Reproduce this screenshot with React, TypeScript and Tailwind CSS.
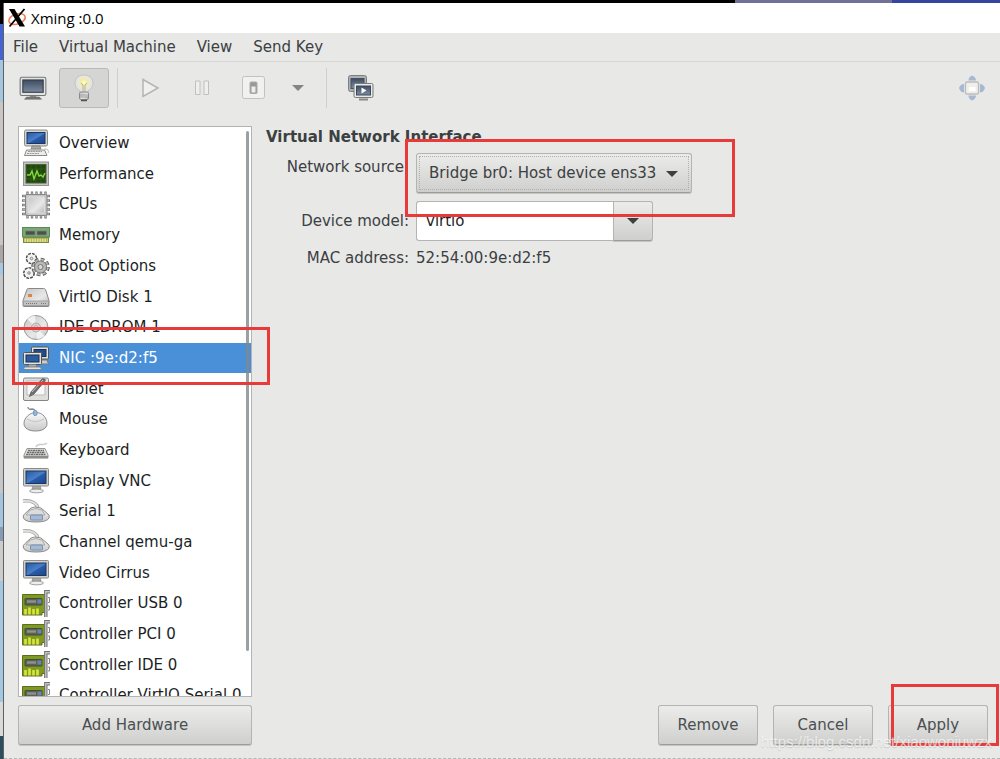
import type { ReactNode } from "react";

const Svg = ({ children, className = "h-7 w-7" }: { children: ReactNode; className?: string }) => (
  <svg viewBox="0 0 28 28" className={`${className} shrink-0`} fill="none" aria-hidden="true">
    {children}
  </svg>
);

const Gradients = () => (
  <svg className="absolute h-0 w-0" aria-hidden="true">
    <defs>
      <linearGradient id="screen" x1="0" y1="0" x2="1" y2="1">
        <stop offset="0" stopColor="#2858a0" />
        <stop offset="0.5" stopColor="#4a80c8" />
        <stop offset="0.55" stopColor="#2a5cab" />
        <stop offset="1" stopColor="#1c4488" />
      </linearGradient>
      <linearGradient id="slate" x1="0" y1="0" x2="0" y2="1">
        <stop offset="0" stopColor="#3e4c60" />
        <stop offset="1" stopColor="#7d8ba0" />
      </linearGradient>
      <linearGradient id="metal" x1="0" y1="0" x2="1" y2="1">
        <stop offset="0" stopColor="#c4c4c4" />
        <stop offset="0.6" stopColor="#e8e8e8" />
        <stop offset="1" stopColor="#b8b8b8" />
      </linearGradient>
      <linearGradient id="shell" x1="0" y1="0" x2="0" y2="1">
        <stop offset="0" stopColor="#fafafa" />
        <stop offset="1" stopColor="#c8c8c8" />
      </linearGradient>
      <radialGradient id="bulb">
        <stop offset="0" stopColor="#fffde0" />
        <stop offset="0.55" stopColor="#f1ec9a" />
        <stop offset="1" stopColor="#e9e9e4" />
      </radialGradient>
    </defs>
  </svg>
);

const ComputerIcon = () => (
  <Svg>
    <rect x="2.500" y="1" width="23" height="16" rx="1.500" fill="#d4d4d0" stroke="#8a8a86" />
    <rect x="5" y="3.500" width="18" height="11" fill="url(#screen)" stroke="#1d3764" />
    <path d="M10 17h8l1 3H9z" fill="#a9a9a5" stroke="#777" strokeWidth=".7" />
    <path d="M4.500 21h18l2.500 5.500H2.500z" fill="#ecece8" stroke="#8a8a86" />
    <path d="M6 22.500h14M5 24.500h12" stroke="#999" strokeDasharray="2 .6" />
    <path d="M22 20q6 0 4 4" stroke="#bbb" />
  </Svg>
);

const PerformanceIcon = () => (
  <Svg>
    <rect x="1.500" y="2" width="25" height="23.500" fill="#c4c5c3" stroke="#91948f" />
    <rect x="4" y="4.500" width="20" height="18.500" fill="#204a0b" stroke="#48613b" />
    <path d="M4 9h20M4 14h20M4 19h20M9 5v18M14 5v18M19 5v18" stroke="#386a20" strokeWidth=".5" />
    <path d="M5 15h3l2-4 2 8 3-8 2 5 2-1 2 2 2-4" stroke="#86d641" strokeWidth="1.4" />
  </Svg>
);

const CpuIcon = () => (
  <Svg>
    <path
      d="M5.500 .5v27M10 .5v27M14.500 .5v27M19 .5v27M23.500 .5v27M0 5h28M0 9.500h28M0 14h28M0 18.500h28M0 23h28"
      stroke="#7b7b7b"
      strokeWidth="2.400"
    />
    <path
      d="M5.500 1.500v25M10 1.500v25M14.500 1.500v25M19 1.500v25M23.500 1.500v25M1 5h26M1 9.500h26M1 14h26M1 18.500h26M1 23h26"
      stroke="#c9c9c9"
      strokeWidth=".8"
    />
    <rect x="3.500" y="3.500" width="21.500" height="21" rx="1.500" fill="#c6c6c6" stroke="#858585" />
    <rect x="6" y="6" width="16.500" height="16" rx="1" fill="url(#metal)" stroke="#dedede" />
  </Svg>
);

const MemoryIcon = () => (
  <Svg>
    <rect x=".5" y="6.500" width="27" height="9.500" fill="#78a873" stroke="#5c8a5a" />
    <path d="M3.500 10h9.500v4H3.500zM15 10h9.500v4H15z" fill="#4c514c" stroke="#7d857b" strokeWidth=".7" />
    <rect x="1.500" y="16.500" width="25" height="5" fill="#b3b65a" stroke="#6f8c4a" />
    <path d="M2.500 19.500h23" stroke="#e6dc86" strokeWidth="3" strokeDasharray="1.500 1" />
  </Svg>
);

const BootIcon = () => (
  <Svg>
    <circle cx="9.500" cy="6.500" r="5" stroke="#4e4e4e" strokeWidth="1.600" strokeDasharray="2.900 1" />
    <circle cx="9.500" cy="6.500" r="4" fill="#f2f2f0" />
    <circle cx="9.500" cy="6.500" r="1.300" fill="#ddd" stroke="#777" strokeWidth=".8" />
    <circle cx="7" cy="21" r="5.200" stroke="#4e4e4e" strokeWidth="1.600" strokeDasharray="2.900 1" />
    <circle cx="7" cy="21" r="4.200" fill="#f2f2f0" />
    <circle cx="7" cy="21" r="1.300" fill="#ddd" stroke="#777" strokeWidth=".8" />
    <circle cx="18.500" cy="15" r="7.500" stroke="#666" strokeWidth="3.600" strokeDasharray="3.600 2.290" />
    <circle cx="18.500" cy="15" r="7.400" stroke="#bbb" strokeWidth="1.600" strokeDasharray="2.800 3.010" strokeDashoffset="-.4" />
    <circle cx="18.500" cy="15" r="6" fill="#b9b9b7" stroke="#777" />
    <circle cx="18.500" cy="15" r="2.500" fill="#d8d8d6" stroke="#777" />
  </Svg>
);

const DiskIcon = () => (
  <Svg>
    <path
      d="M5 6.500q0-1 1.500-1h15q1.500 0 2 1l3.500 11v5q0 1-1 1h-24q-1 0-1-1v-5z"
      fill="url(#metal)"
      stroke="#888"
    />
    <path d="M1.500 18h25v4.500h-25z" fill="#c2c2c0" stroke="#8f8f8d" strokeWidth=".7" />
    <rect x="6" y="11" width="4" height="3" fill="#e5813f" />
    <path d="M4 20.500h11M19 20.500h5" stroke="#777" strokeDasharray="1 1" />
  </Svg>
);

const CdIcon = () => (
  <Svg>
    <circle cx="14" cy="14.500" r="12" fill="url(#metal)" stroke="#999" />
    <path d="M14 14.500L5 6q4-3.500 8-3.500zM14 14.500l9 8.500q-4 3-8 3.500z" fill="#f7f7f5" opacity=".8" />
    <circle cx="14" cy="14.500" r="4.500" fill="#d2d2d2" stroke="#aaa" />
    <circle cx="14" cy="14.500" r="1.700" fill="#fff" stroke="#ba9f9b" />
  </Svg>
);

const NicIcon = () => (
  <Svg>
    <rect x="9.500" y="3" width="17" height="12" rx="1" fill="#e4e2db" stroke="#555" />
    <rect x="12" y="5.500" width="12" height="7" fill="#204c8a" stroke="#152f5a" />
    <path d="M16 16h9l1.500 4h-8" fill="#ccc" stroke="#777" />
    <rect x="1.500" y="8.500" width="18" height="12" rx="1" fill="#e4e2db" stroke="#555" />
    <rect x="4" y="11" width="13" height="7" fill="#2a5b9d" stroke="#152f5a" />
    <path d="M7 20.500h7v2.500H7z" fill="#aaa" />
    <path d="M2.500 23h16l1 2.500h-18z" fill="#e4e2db" stroke="#777" strokeWidth=".8" />
  </Svg>
);

const TabletIcon = () => (
  <Svg>
    <rect x="1.500" y="3" width="25" height="22.500" rx="1.500" fill="#dededc" stroke="#858583" />
    <path d="M5 6h18v14H5z" fill="#f8f8f8" stroke="#bbb" />
    <path d="M20 4q4-1 3 2l-11 13-4.500 2.500L9 17z" fill="#6f716f" stroke="#5a5c5a" strokeWidth=".8" />
    <path d="M10 17L21 5" stroke="#c4c4c4" />
  </Svg>
);

const MouseIcon = () => (
  <Svg>
    <path d="M6 2q0 3 4 2 4 0 4 6" stroke="#888" strokeWidth="1.300" />
    <path
      d="M14 7.500c7 0 11 6 11 11 0 5-5 7.500-11.500 7.500S2 23.500 2 18.500c0-5 5-11 12-11z"
      fill="url(#shell)"
      stroke="#8b8b89"
    />
    <path d="M5 14q8 5 17 0" stroke="#c2c2c0" />
    <rect x="11.500" y="5.500" width="3.500" height="5" rx="1.500" fill="#93b8e0" stroke="#7397c2" />
  </Svg>
);

const KeyboardIcon = () => (
  <Svg>
    <path d="M14 11q1-3 5-2.500T25 7" stroke="#ccc" strokeWidth="1.500" />
    <path d="M5 12.500h18l3 6.500v3H2v-3z" fill="#e2e2e0" stroke="#979795" />
    <path d="M6 14.500h16M5 16.500h18M4 18.500h20" stroke="#6d6d6d" strokeWidth="1.500" strokeDasharray="2 .5" />
    <path d="M2 21h24" stroke="#8d8d8b" strokeWidth="2.400" />
  </Svg>
);

const DisplayIcon = () => (
  <Svg>
    <path d="M11 18h7l1 4h-9z" fill="#aaa" stroke="#888" strokeWidth=".7" />
    <ellipse cx="14.500" cy="24" rx="7" ry="1.800" fill="#eee" stroke="#a0a09e" />
    <rect x="1.500" y="1.500" width="25" height="17.500" rx="1" fill="#cfcfcb" stroke="#8a8a86" />
    <rect x="4" y="4" width="20" height="12.500" fill="url(#screen)" stroke="#1d3764" />
  </Svg>
);

const SerialIcon = () => (
  <Svg>
    <path d="M1 3c8-1 15 2 15 9" stroke="#a8a8a6" strokeWidth="3.500" />
    <path d="M1 3c8-1 15 2 15 9" stroke="#e2e2e0" strokeWidth="1.800" />
    <path
      d="M9 10q3-2 10 0l7 6q2 1.500 1 4-2 4-13 4T1.500 20q-1-2.500 1-4z"
      fill="url(#shell)"
      stroke="#8a8a88"
    />
    <path d="M8 12q6-3 12 0l3 5H4z" fill="#dcdcda" stroke="#aaa" />
    <rect x="8.500" y="17" width="12" height="5" rx="1" fill="#a3bbd8" stroke="#7b8fa8" />
  </Svg>
);

const CardIcon = () => (
  <Svg>
    <path d="M.5 4.500h23v18h-3.500v2.500H.5z" fill="#7f9a24" stroke="#5c6f1f" />
    <rect x="3" y="8.500" width="17" height="6.500" rx=".5" fill="#5c6158" stroke="#43502c" />
    <path d="M5 11.500h9" stroke="#90938e" strokeWidth="2.400" />
    <path d="M15.500 9.500h4v4h-4z" fill="#6784b5" />
    <path d="M3.500 24.500v-5.500M7.500 24.500v-7M11.500 24.500v-5.500M15.500 24.500v-6" stroke="#dbe63a" strokeWidth="2.600" />
    <path d="M28 1.800h-4.200V27" stroke="#727272" strokeWidth="3.400" />
    <path d="M28 1.800h-4.200V27" stroke="#c4c4c2" strokeWidth="1.400" />
    <path d="M26 7.500h1.500v5H26M26 16h1.500v4H26" stroke="#888" />
  </Svg>
);

const hardware = [
  { icon: ComputerIcon, label: "Overview" },
  { icon: PerformanceIcon, label: "Performance" },
  { icon: CpuIcon, label: "CPUs" },
  { icon: MemoryIcon, label: "Memory" },
  { icon: BootIcon, label: "Boot Options" },
  { icon: DiskIcon, label: "VirtIO Disk 1" },
  { icon: CdIcon, label: "IDE CDROM 1" },
  { icon: NicIcon, label: "NIC :9e:d2:f5", selected: true },
  { icon: TabletIcon, label: "Tablet" },
  { icon: MouseIcon, label: "Mouse" },
  { icon: KeyboardIcon, label: "Keyboard" },
  { icon: DisplayIcon, label: "Display VNC" },
  { icon: SerialIcon, label: "Serial 1" },
  { icon: SerialIcon, label: "Channel qemu-ga" },
  { icon: DisplayIcon, label: "Video Cirrus" },
  { icon: CardIcon, label: "Controller USB 0" },
  { icon: CardIcon, label: "Controller PCI 0" },
  { icon: CardIcon, label: "Controller IDE 0" },
  { icon: CardIcon, label: "Controller VirtIO Serial 0" },
];

const buttonStyle =
  "h-10 rounded-[3px] border border-[#b4b5b3] border-b-[#9c9d9b] bg-linear-to-b from-[#ececeb] to-[#cfcfcd] shadow-[0_1px_0_#c4c5c3]";

const actionStyle = `${buttonStyle} w-[100px] text-[#4a4f51]`;

const Caret = ({ className = "" }: { className?: string }) => (
  <svg viewBox="0 0 12 6" className={`h-[6px] w-3 ${className}`} aria-hidden="true">
    <path d="M0 0h12L6 6z" fill="currentColor" />
  </svg>
);

function DesktopEdge() {
  return (
    <div className="flex w-1 shrink-0 flex-col border-r border-[#5f6163]">
      <div className="h-[21px] bg-black" />
      <div className="h-9 bg-[#4163d6]" />
      <div className="h-[42px] bg-[#a5c6df]" />
      <div className="h-[143px] bg-[#c9c6c3]" />
      <div className="h-[18px] bg-[#a9a6a4]" />
      <div className="h-3 bg-[#a5c8e4]" />
      <div className="h-[218px] bg-[#c6c6c6]" />
      <div className="h-[34px] bg-[#a3c5e0]" />
      <div className="h-[14px] bg-[#8699b5]" />
      <div className="h-10 bg-[#cccccb]" />
      <div className="h-[121px] bg-[#a3c9e2]" />
      <div className="h-[34px] bg-[#dadad9]" />
      <div className="grow bg-[#2d4e60]" />
    </div>
  );
}

function TitleBar() {
  return (
    <header className="flex h-[30px] items-center gap-1 bg-white pl-[3px] font-['Open_Sans','Noto_Sans',sans-serif] text-[15px] text-black">
      <svg viewBox="0 0 20 20" className="h-5 w-5" aria-hidden="true">
        <ellipse cx="10" cy="11" rx="8.500" ry="5" fill="none" stroke="#ee7a50" strokeWidth="1.600" transform="rotate(-18 10 11)" />
        <path d="M2 1h5.500L18 18.500h-5.500z" fill="#000" />
        <path d="M17.500 1L2.500 18.500" stroke="#000" strokeWidth="1.800" />
      </svg>
      <h1>Xming :0.0</h1>
    </header>
  );
}

function Toolbar() {
  return (
    <div className="flex h-[51px] items-center pl-[14px] pr-3">
      <button type="button" aria-label="Console">
        <Svg className="h-[30px] w-[30px]">
          <path d="M11 20h6v3h-6z" fill="#8d8f8c" />
          <path d="M6 24.500l2-2h12l2 2z" fill="#777" stroke="#666" strokeWidth=".5" />
          <rect x="2" y="4" width="24" height="17" rx="1.500" fill="#e2e2df" stroke="#74777a" />
          <rect x="4.500" y="6.500" width="19" height="11.500" fill="url(#slate)" stroke="#303c4c" />
        </Svg>
      </button>
      <button
        type="button"
        aria-label="Details"
        aria-pressed="true"
        className="ml-[11px] flex h-10 w-[50px] items-center justify-center rounded-[3px] border border-[#b9bab8] bg-[#d5d6d4]"
      >
        <Svg>
          <path d="M10 17C2 12 4 1 14 1s12 11 4 16v2h-8z" fill="#e4e4e2" stroke="#c2c2c0" />
          <circle cx="14" cy="8.500" r="6" fill="url(#bulb)" />
          <path d="M11 9l2 2v7M17 9l-2 2v7" stroke="#aaa58c" strokeWidth=".8" />
          <rect x="9.500" y="18" width="9" height="7.500" rx="1.500" fill="url(#metal)" stroke="#888" />
          <path d="M10 21h8M10 23h8" stroke="#888" strokeWidth=".8" />
          <path d="M11 26.500h6" stroke="#555" strokeWidth="1.500" />
        </Svg>
      </button>
      <div className="ml-2 h-10 w-px bg-[#cfd0ce]" />
      <button type="button" aria-label="Run" className="ml-[18px]" disabled>
        <Svg>
          <path d="M7 5.500L22 14 7 22.500z" fill="#f0f0ee" stroke="#b4b5b3" strokeWidth="1.500" />
        </Svg>
      </button>
      <button type="button" aria-label="Pause" className="ml-6" disabled>
        <Svg>
          <path d="M7.500 7h4.500v13.500H7.500zM16 7h4.500v13.500H16z" fill="#efefed" stroke="#c0c1bf" />
        </Svg>
      </button>
      <button type="button" aria-label="Shut down" className="ml-6" disabled>
        <Svg>
          <rect x="2.500" y="2.500" width="22" height="22" rx="2" fill="#f1f1ef" stroke="#c2c3c1" />
          <rect x="10" y="8" width="7" height="11.500" rx="1" fill="#999" stroke="#aaaba9" />
          <rect x="11.500" y="12.500" width="4" height="6" fill="#eee" />
        </Svg>
      </button>
      <button type="button" aria-label="Shut down options" className="ml-6" disabled>
        <Caret className="text-[#838684]" />
      </button>
      <div className="ml-[22px] h-10 w-px bg-[#cfd0ce]" />
      <button type="button" aria-label="Snapshots" className="ml-5">
        <Svg>
          <rect x="1.500" y="1.500" width="18" height="16" rx="2" fill="#aeb1b2" stroke="#7c7f80" />
          <rect x="4" y="4.500" width="13" height="10" fill="url(#slate)" stroke="#445164" />
          <rect x="7" y="9.500" width="19" height="14" rx="1.500" fill="#e9e9e7" stroke="#777a7c" />
          <rect x="9.500" y="12" width="14" height="9" fill="url(#slate)" stroke="#3a485c" />
          <path d="M14.500 13.500l5 3-5 3z" fill="#fff" />
          <path d="M12 25.500h9" stroke="#888" strokeWidth="2" />
        </Svg>
      </button>
      <button type="button" aria-label="Fullscreen" className="ml-auto mr-0.5" disabled>
        <Svg>
          <rect x="7.500" y="8" width="13" height="12" rx="1.500" fill="#efefed" stroke="#bcbdbb" strokeWidth="1.400" />
          <rect x="11" y="13" width="6.500" height="4" fill="#fff" />
          <path
            d="M10.500 6.500q0-3.500 3.500-5 4 1.500 4 5zM10.500 21.500q0 3.500 3.500 5 4-1.500 4-5zM6 10q-3.500 0-5 4 1.500 4.500 5 4.500zM22 10q3.500 0 5 4-1.500 4.500-5 4.500z"
            fill="#a7b9d2"
          />
        </Svg>
      </button>
    </div>
  );
}

function HardwareList() {
  return (
    <aside className="relative flex w-[234px] shrink-0 flex-col gap-2">
      <div className="relative h-[571px] overflow-hidden border border-[#b3b4b2] bg-white">
        <ul className="grid h-[584px] auto-rows-fr pt-px">
          {hardware.map((item) => (
            <li key={item.label} className="flex">
              <button
                type="button"
                className={`flex w-full items-center gap-[9px] whitespace-nowrap pl-[3px] text-left ${
                  item.selected ? "bg-[#4a90d9] text-white" : "text-[#1c1f1f]"
                }`}
              >
                <item.icon />
                {item.label}
              </button>
            </li>
          ))}
        </ul>
        <div className="absolute right-0.5 top-1 h-[520px] w-[3px] rounded-full bg-[#7f8a8b]/80" />
      </div>
      <button type="button" className={`${buttonStyle} text-[#4a4f51]`}>
        Add Hardware
      </button>
      <div className="pointer-events-none absolute -left-1.5 -right-[18px] top-[201px] h-[58px] border-[3px] border-[#e93a3a]" />
    </aside>
  );
}

function NetworkForm() {
  return (
    <section className="relative">
      <h2 className="h-[27px] pt-px font-bold leading-5">Virtual Network Interface</h2>
      <div className="grid grid-cols-[143px_auto] justify-start gap-x-[7px]">
        <label htmlFor="source" className="pt-1 text-right leading-5">
          Network source:
        </label>
        <div className="relative w-[276px]">
          <select
            id="source"
            className={`${buttonStyle} w-full appearance-none pl-3 pr-8 outline-1 -outline-offset-4 outline-dotted outline-[#b0b1af]`}
          >
            <option>Bridge br0: Host device ens33</option>
          </select>
          <Caret className="pointer-events-none absolute right-[14px] top-[18px]" />
        </div>
        <label htmlFor="model" className="mt-2 self-center text-right leading-5">
          Device model:
        </label>
        <div className="mt-2 flex w-[237px]">
          <input
            id="model"
            defaultValue="virtio"
            className="h-10 min-w-0 grow rounded-l-[3px] border border-r-0 border-[#b4b5b3] bg-white px-[9px] text-[#1c1f1f] outline-none"
          />
          <button
            type="button"
            aria-label="Show device models"
            className={`${buttonStyle} flex w-10 shrink-0 items-center justify-center rounded-l-none`}
          >
            <Caret />
          </button>
        </div>
        <span className="mt-[7px] text-right leading-5">MAC address:</span>
        <span className="mt-[7px] leading-5">52:54:00:9e:d2:f5</span>
      </div>
      <div className="pointer-events-none absolute left-[139px] top-[13px] h-[78px] w-[330px] border-[3px] border-[#e93a3a]" />
    </section>
  );
}

function Actions() {
  return (
    <div className="relative mt-auto flex justify-end gap-[15px]">
      <button type="button" className={actionStyle}>
        Remove
      </button>
      <button type="button" className={actionStyle}>
        Cancel
      </button>
      <button type="button" className={actionStyle}>
        Apply
      </button>
      <div className="pointer-events-none absolute -right-[11px] -top-[21px] h-[62px] w-[108px] border-[3px] border-[#e93a3a]" />
      <span className="pointer-events-none absolute -right-1 top-[27px] whitespace-nowrap font-['Liberation_Sans',sans-serif] text-[15px] leading-5 text-white/65 [text-shadow:0_1px_1px_#8885]">
        https://blog.csdn.net/xiaowoniuwzx
      </span>
    </div>
  );
}

export default function App() {
  return (
    <div className="flex min-h-screen flex-col overflow-hidden font-['DejaVu_Sans',sans-serif] text-[15px] text-[#3b4042]">
      <Gradients />
      <div className="flex h-[3px]">
        <div className="w-[735px] bg-black" />
        <div className="w-[157px] bg-[#6f7198]" />
        <div className="grow bg-[#3645a0]" />
      </div>
      <div className="flex grow">
        <DesktopEdge />
        <div className="flex min-w-0 grow flex-col border-b border-dashed border-[#b5b6b4] bg-[#e8e8e7]">
          <TitleBar />
          <nav className="flex h-[29px] items-center gap-[21px] border-b border-[#d6d6d5] pl-[9px] pt-px">
            <button type="button">File</button>
            <button type="button">Virtual Machine</button>
            <button type="button">View</button>
            <button type="button">Send Key</button>
          </nav>
          <Toolbar />
          <main className="flex grow gap-[14px] pb-[13px] pl-[14px] pr-3 pt-[13px]">
            <HardwareList />
            <div className="flex grow flex-col">
              <NetworkForm />
              <Actions />
            </div>
          </main>
        </div>
      </div>
    </div>
  );
}
